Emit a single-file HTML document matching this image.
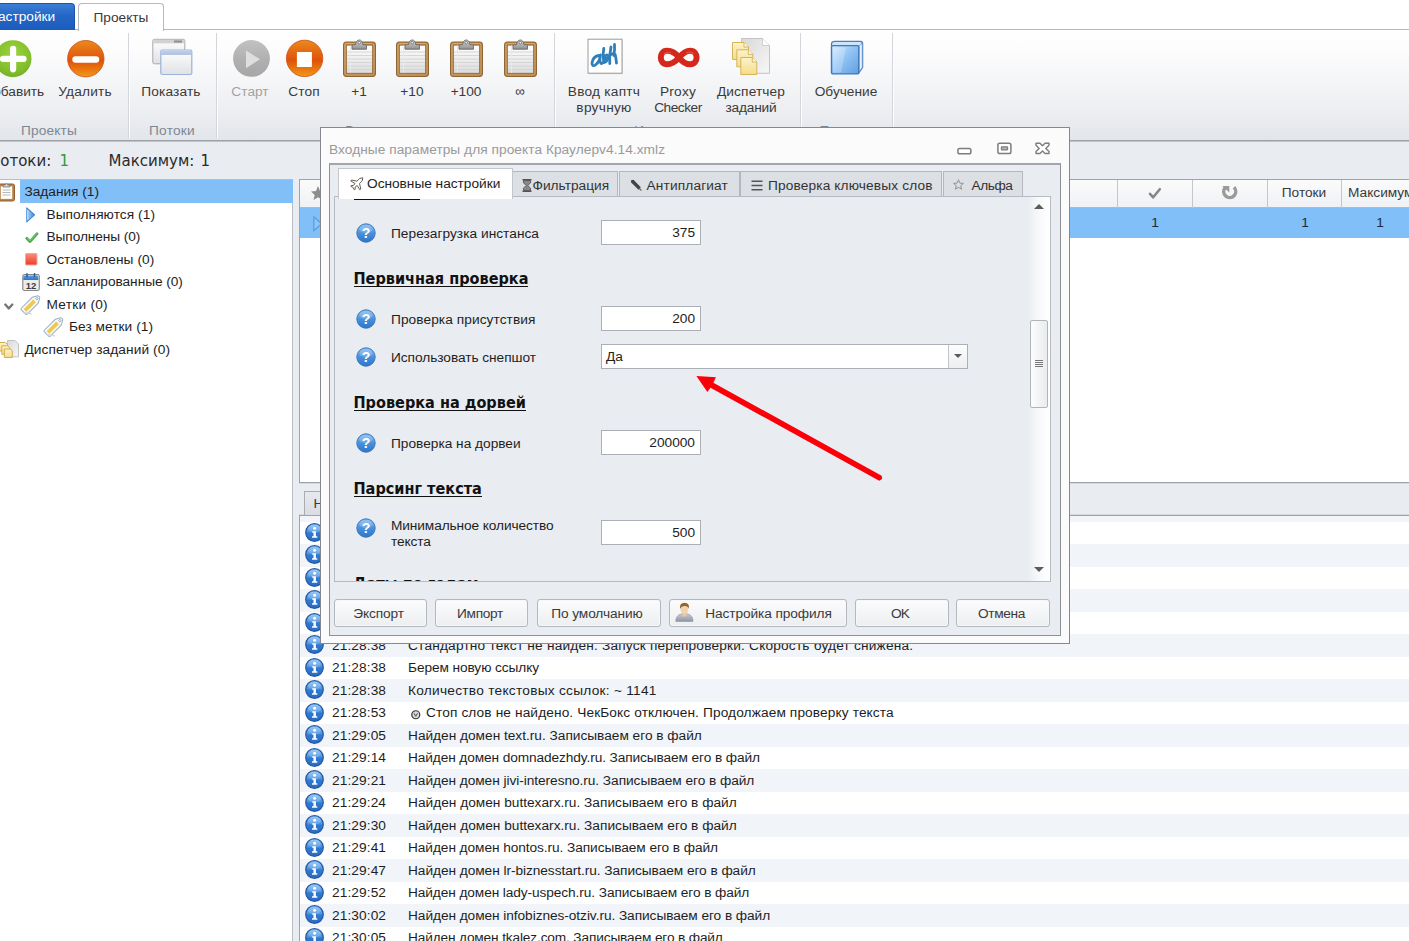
<!DOCTYPE html>
<html lang="ru"><head><meta charset="utf-8"><title>ZennoPoster</title>
<style>
*{box-sizing:border-box;margin:0;padding:0}
html,body{width:1409px;height:941px;overflow:hidden;background:#e9ecf1}
body{position:relative;font-family:"Liberation Sans",sans-serif;font-size:13.7px;color:#222;line-height:16px}
.abs{position:absolute}
.t{position:absolute;white-space:nowrap}
.c{position:absolute;white-space:nowrap;transform:translateX(-50%);text-align:center}
svg{position:absolute;overflow:visible}
/* top */
#tabstrip{left:0;top:0;width:1409px;height:30px;background:#fff}
#tab1{left:-6px;top:3px;width:81px;height:27px;border-radius:4px 4px 0 0;background:linear-gradient(#3b7fd6 0,#2466c6 45%,#1b5bbb 100%);border:1px solid #1d55ab;border-bottom:none}
#tab1 span{left:3px;top:5px;color:#fff}
#tab2{left:78px;top:3px;width:86px;height:28px;border-radius:4px 4px 0 0;background:#fff;border:1px solid #b5b8bd;border-bottom:none;z-index:3}
#ribbon{left:0;top:29px;width:1409px;height:112px;background:linear-gradient(#ffffff 0,#fcfcfd 20%,#f3f4f6 52%,#eaecf0 80%,#e2e5e9 100%);border-top:1px solid #b5b8bd;border-bottom:1px solid #9fa3a9;box-shadow:0 1px 0 #bfc2c7}
.sep{position:absolute;top:33px;width:2px;height:105px;background:linear-gradient(90deg,#d3d6db 0,#d3d6db 50%,#fdfdfe 50%,#fdfdfe 100%)}
.rl{color:#3a3a3a}
.dis{color:#a3a3a3}
.cap{color:#7d8793}

.st{font-family:"DejaVu Sans","Liberation Sans",sans-serif;font-size:15px;line-height:20px;color:#2b2b2b}
#tree{left:-1px;top:179px;width:294px;height:770px;background:#fff;border:1px solid #b9bcc2}
#treesel{left:20px;top:179.5px;width:273px;height:23px;background:#80bff7}
.tr{color:#1e1e1e}
#grid{left:299px;top:179px;width:1120px;height:304px;background:#fff;border:1px solid #9fa3a9;box-shadow:0 1px 0 #d5d8dc}
#ghead{left:300px;top:180px;width:1110px;height:28px;background:linear-gradient(#fbfbfc,#eff1f4);border-bottom:1px solid #b4b8be}
.gsep{position:absolute;top:180px;width:1px;height:27.5px;background:#c3c6cb}
#grow{left:300px;top:208px;width:1110px;height:29.5px;background:#80bff7}
#loghead{left:298px;top:484px;width:1120px;height:32px;background:#e9ecf1}
#log{left:299px;top:515px;width:1120px;height:430px;background:#fff;border:1px solid #9fa3a9;box-shadow:0 -1px 0 #d5d8dc;overflow:hidden}
.stripe{position:absolute;left:0;width:1120px;height:22.5px;background:#f1f4f9}
.lg{color:#1e1e1e}

#dlg{left:320px;top:127px;width:750px;height:517px;background:#fbfbfc;border:1px solid #85898f;z-index:10}
#dw{left:0;top:-1px;width:748px;height:516px}
#dlg .ttl{left:8px;top:15px;color:#9a9a9a}
#inner{left:8px;top:36px;width:732px;height:473px;background:#e9ecf1;border:1px solid #8e9298;border-top:2px solid #a2a6ac}
.tab{position:absolute;top:44px;height:27px;background:#dcdfe4;border:1px solid #b4b8be;border-bottom:none;color:#333;white-space:nowrap}
.tab span{position:absolute;top:6px;white-space:nowrap}
#tabA{left:17px;top:41px;width:175px;height:31px;background:#fff;border:1px solid #c3c6cb;border-bottom:none;z-index:2}
#page{left:13px;top:69px;width:717px;height:386px;background:#e9ecf0;border:1px solid #b7bbc1;overflow:hidden}
#page .h{position:absolute;left:18.5px;font-weight:bold;font-size:16.1px;color:#111;white-space:nowrap;border-bottom:1.5px solid #111;line-height:15px;padding-bottom:0px;font-family:"DejaVu Sans Condensed","Liberation Sans",sans-serif}
#page .lb{position:absolute;left:56px;color:#1e1e1e;white-space:nowrap}
#page .in{position:absolute;left:266px;width:100px;height:25px;background:#fff;border:1px solid #abafb6;text-align:right;padding:4px 5px 0 0;color:#1e1e1e}
#page .q{position:absolute;left:22px;width:20px;height:20px}
#sb{left:692.5px;top:0;width:22px;height:384px;background:linear-gradient(90deg,#e9ecf0,#f6f7f9 40%,#ffffff)}
#thumb{left:2px;top:123px;width:18.5px;height:88px;border:1px solid #b0b4ba;border-radius:2px;background:linear-gradient(90deg,#fdfdfd,#e9ebee)}
.btn{position:absolute;top:472px;height:28px;border:1px solid #b4b8be;border-radius:3px;background:linear-gradient(#fcfcfd,#eceef1);color:#3a3a3a;text-align:center;padding:6px 3px 0 0;white-space:nowrap;box-shadow:0 0 0 1px #f6f7f9 inset}
</style></head><body>
<div id="tabstrip" class="abs"></div>
<div id="ribbon" class="abs"></div>
<div id="tab1" class="abs"><span class="t">астройки</span></div>
<div id="tab2" class="abs"><span class="c" style="left:42px;top:6px;color:#3a3a3a">Проекты</span></div>
<div class="sep" style="left:128px"></div>
<div class="sep" style="left:216px"></div>
<div class="sep" style="left:554px"></div>
<div class="sep" style="left:800px"></div>
<div class="sep" style="left:892px"></div>
<span id="rl1" class="c rl" style="left:14px;top:84px">Добавить</span>
<span id="rl2" class="c rl" style="left:85px;top:84px;letter-spacing:0.162px">Удалить</span>
<span id="rl3" class="c rl" style="left:171px;top:84px;letter-spacing:0.139px">Показать</span>
<span id="rl4" class="c dis" style="left:250px;top:84px;letter-spacing:0.019px">Старт</span>
<span id="rl5" class="c rl" style="left:304px;top:84px;letter-spacing:0.067px">Стоп</span>
<span id="rl6" class="c rl" style="left:359px;top:84px;letter-spacing:0.045px">+1</span>
<span id="rl7" class="c rl" style="left:412px;top:84px;letter-spacing:0.027px">+10</span>
<span id="rl8" class="c rl" style="left:466px;top:84px;letter-spacing:-0.036px">+100</span>
<span id="rl9" class="c rl" style="left:520px;top:84px">∞</span>
<span id="rl10" class="c rl" style="left:604px;top:84px;letter-spacing:0.234px">Ввод каптч</span>
<span id="rl11" class="c rl" style="left:604px;top:100px;letter-spacing:0.275px">вручную</span>
<span id="rl12" class="c rl" style="left:678px;top:84px;letter-spacing:0.240px">Proxy</span>
<span id="rl13" class="c rl" style="left:678px;top:100px;letter-spacing:-0.467px">Checker</span>
<span id="rl14" class="c rl" style="left:751px;top:84px;letter-spacing:0.126px">Диспетчер</span>
<span id="rl15" class="c rl" style="left:751px;top:100px;letter-spacing:-0.178px">заданий</span>
<span id="rl16" class="c rl" style="left:846px;top:84px;letter-spacing:0.001px">Обучение</span>
<span id="rl17" class="c cap" style="left:49px;top:123px;letter-spacing:0.152px">Проекты</span>
<span id="rl18" class="c cap" style="left:172px;top:123px;letter-spacing:0.247px">Потоки</span>
<span id="rl19" class="c cap" style="left:385px;top:123px">Выполнение</span>
<span id="rl20" class="c cap" style="left:677px;top:123px">Инструменты</span>
<span id="rl21" class="c cap" style="left:846px;top:123px">Помощь</span>
<svg width="0" height="0" style="left:0;top:0"><defs>
<radialGradient id="gGreen" cx="50%" cy="35%" r="70%"><stop offset="0" stop-color="#9ad33f"/><stop offset=".6" stop-color="#86c22e"/><stop offset="1" stop-color="#73ae22"/></radialGradient>
<linearGradient id="gOr" x1="0" y1="0" x2="0" y2="1"><stop offset="0" stop-color="#ec8a1c"/><stop offset=".25" stop-color="#e57014"/><stop offset=".55" stop-color="#de520b"/><stop offset=".8" stop-color="#e9780f"/><stop offset="1" stop-color="#f2981d"/></linearGradient>
<linearGradient id="gGray" x1="0" y1="0" x2="0" y2="1"><stop offset="0" stop-color="#c2c2c2"/><stop offset=".5" stop-color="#b1b1b1"/><stop offset="1" stop-color="#a6a6a6"/></linearGradient>
<linearGradient id="gBoard" x1="0" y1="0" x2="1" y2="1"><stop offset="0" stop-color="#bb8a4e"/><stop offset="1" stop-color="#a3733a"/></linearGradient>
<linearGradient id="gPaper" x1="0" y1="0" x2="0" y2="1"><stop offset="0" stop-color="#ffffff"/><stop offset="1" stop-color="#dcdcdc"/></linearGradient>
<linearGradient id="gClip" x1="0" y1="0" x2="0" y2="1"><stop offset="0" stop-color="#d8d8d8"/><stop offset="1" stop-color="#8f8f8f"/></linearGradient>
<linearGradient id="gWin" x1="0" y1="0" x2="0" y2="1"><stop offset="0" stop-color="#ffffff"/><stop offset="1" stop-color="#dfe1e5"/></linearGradient>
<linearGradient id="gBook" x1="0" y1="0" x2="1" y2="1"><stop offset="0" stop-color="#d4e9ff"/><stop offset=".45" stop-color="#93c4f5"/><stop offset="1" stop-color="#5f9fe0"/></linearGradient>
<linearGradient id="gInfo" x1="0" y1="0" x2="0" y2="1"><stop offset="0" stop-color="#86c3f5"/><stop offset=".45" stop-color="#4a92e0"/><stop offset=".55" stop-color="#2f78d0"/><stop offset="1" stop-color="#2a6cc6"/></linearGradient>
<linearGradient id="gQ" x1="0" y1="0" x2="0" y2="1"><stop offset="0" stop-color="#7db9f0"/><stop offset=".5" stop-color="#4a90dc"/><stop offset="1" stop-color="#2f74c8"/></linearGradient>
<linearGradient id="gYel" x1="0" y1="0" x2="0" y2="1"><stop offset="0" stop-color="#fdf3c8"/><stop offset="1" stop-color="#f3dc8c"/></linearGradient>
<linearGradient id="gPg" x1="0" y1="0" x2="1" y2="1"><stop offset="0" stop-color="#d9d9d9"/><stop offset="1" stop-color="#f7f7f7"/></linearGradient>
<linearGradient id="gRed" x1="0" y1="0" x2="0" y2="1"><stop offset="0" stop-color="#fb8d7c"/><stop offset="1" stop-color="#ee3a2a"/></linearGradient>
<linearGradient id="gCal" x1="0" y1="0" x2="0" y2="1"><stop offset="0" stop-color="#5aa2e3"/><stop offset="1" stop-color="#2f74c0"/></linearGradient>
<linearGradient id="gPlay" x1="0" y1="0" x2="1" y2="0"><stop offset="0" stop-color="#a9d4f7"/><stop offset="1" stop-color="#3f88d6"/></linearGradient>
<linearGradient id="gBody" x1="0" y1="0" x2="0" y2="1"><stop offset="0" stop-color="#c9ccd4"/><stop offset="1" stop-color="#8f95a3"/></linearGradient>
<g id="clipb"><rect x=".5" y="3" width="32" height="34.500" rx="2.400" fill="url(#gBoard)" stroke="#8f6633" stroke-width="1"/><rect x="2" y="4.500" width="29" height="31.500" rx="1.600" fill="none" stroke="#d3aa73" stroke-width="1"/><rect x="3.600" y="6.200" width="25.800" height="28" fill="url(#gPaper)" stroke="#936a38" stroke-width=".7"/><g stroke="#cfcfcf" stroke-width=".8"><path d="M4 13h25M4 16.500h25M4 20h25M4 23.500h25M4 27h25M4 30.500h25"/></g><path d="M7.500 6.600v27" stroke="#e9e9e9" stroke-width="1"/><path d="M9 10.200 v-3.200 q0-1.300 1.300-1.300 h2.300 q.6-4.700 3.650-4.700 t3.650 4.700 h2.300 q1.300 0 1.300 1.300 V10.200 Z" fill="url(#gClip)" stroke="#6a6a6a" stroke-width=".9"/><circle cx="16.250" cy="3.700" r="1.300" fill="#f2f2f2" stroke="#6a6a6a" stroke-width=".8"/></g>
<g id="info"><circle cx="9.500" cy="9.500" r="8.800" fill="url(#gInfo)" stroke="#2458a4" stroke-width="1.200"/><ellipse cx="9.500" cy="5.500" rx="6.500" ry="3.800" fill="#ffffff" opacity=".18"/><circle cx="9.600" cy="5.200" r="1.500" fill="#fff"/><path d="M7.300 8.200h3.600v5h1.400v1.600H7v-1.600h1.500V9.800H7.300Z" fill="#fff"/></g>
<g id="tag"><g transform="translate(10 10.5) rotate(-45)"><path d="M-9.500 -4.200 H6 L11 -1.500 Q12 0 11 1.500 L6 4.200 H-9.500 Q-10.600 4.200 -10.600 3 V-3 Q-10.600 -4.200 -9.500 -4.200 Z" fill="#f6f8fa" stroke="#9db0c4" stroke-width="1"/><rect x="-8.500" y="-1.900" width="13.500" height="3.800" fill="#efc94a"/><circle cx="8.300" cy="0" r="1.100" fill="#fff" stroke="#8ea2b8" stroke-width=".8"/></g><path d="M3.500 18.800 L10 19.800" stroke="#d3d6da" stroke-width="1.600" stroke-linecap="round"/></g>
<g id="play"><path d="M.8 .8 L8.600 7.800 L.8 14.800 Z" fill="url(#gPlay)" stroke="#3f86d3" stroke-width="1.100" stroke-linejoin="round"/><path d="M1.700 2.800 V12.800" stroke="#c4e2fa" stroke-width="1"/></g>
</defs></svg>
<svg style="left:-6px;top:40px" width="38" height="38"><circle cx="19" cy="18.700" r="18.500" fill="url(#gGreen)"/><path d="M9 18.900h20.500M19.100 8.800v20.500" stroke="#fff" stroke-width="6.200" stroke-linecap="round"/></svg>
<svg style="left:67px;top:40px" width="38" height="38"><circle cx="18.800" cy="18.700" r="18.200" fill="url(#gOr)" stroke="#d04d10" stroke-width=".8"/><path d="M8.500 19.500h20.500" stroke="#fff" stroke-width="6.400" stroke-linecap="round"/></svg>
<svg style="left:152px;top:38px" width="41" height="38"><rect x=".8" y="1.300" width="32" height="24.500" rx="1.500" fill="url(#gWin)" stroke="#a9a9a9" stroke-width="1"/><rect x="1.300" y="1.800" width="31" height="3.600" fill="#d2d2d2"/><rect x="22" y="2.500" width="8" height="2" fill="#8f8f8f"/><rect x="8.800" y="12" width="31" height="24.500" rx="1.500" fill="url(#gWin)" stroke="#9db2d8" stroke-width="1.200"/><rect x="9.400" y="12.600" width="29.800" height="3.400" fill="#b9cbea"/><path d="M9.400 16.300h29.800" stroke="#8ea6d2" stroke-width=".8"/></svg>
<svg style="left:233px;top:40px" width="38" height="38"><circle cx="18.500" cy="18.400" r="18.400" fill="url(#gGray)"/><path d="M13 10.500 L27 19.300 L13 28.200 Z" fill="#dedede"/></svg>
<svg style="left:286px;top:40px" width="38" height="38"><circle cx="18.600" cy="18.400" r="18.200" fill="url(#gOr)" stroke="#d04d10" stroke-width=".8"/><rect x="10.900" y="12" width="15" height="15" fill="#fff"/></svg>
<svg style="left:342.5px;top:38.700px" width="33" height="38"><use href="#clipb"/></svg>
<svg style="left:396.2px;top:38.700px" width="33" height="38"><use href="#clipb"/></svg>
<svg style="left:449.9px;top:38.700px" width="33" height="38"><use href="#clipb"/></svg>
<svg style="left:503.6px;top:38.700px" width="33" height="38"><use href="#clipb"/></svg>
<svg style="left:587px;top:38px" width="37" height="38"><rect x="1.800" y="2.200" width="34" height="34" fill="#bdbdbd" opacity=".55"/><rect x="1" y="1.200" width="34" height="34" fill="#fff" stroke="#9c9c9c" stroke-width="1"/><g fill="none" stroke="#2f80ba" stroke-width="2.800" stroke-linecap="round" stroke-linejoin="round"><path d="M11.500 17.500 q-5.500 1 -6.500 7.500 q0 3.500 3.200 2.200 q4.500-3 5.300-10.200 q-1.500 7 .8 8.500 q2.500 0 4.500-6"/><path d="M16.800 10.500 q-1.500 9 .5 14 q3.500-1 4.200-6.500 q-2-2.500-4 1"/><path d="M24 9 q-2 9-1.200 16.500 M23 17.500 q3.200-3.500 5.200-1 q.8 3.500 1.300 8.500"/><path d="M27.500 6.500 q.5 6 -.8 11"/></g></svg>
<svg style="left:658px;top:48px" width="42" height="20"><path d="M21 9.600 C16.500 3.300 12.500 2.800 9 2.800 C4.500 2.800 2.800 6.300 2.800 9.600 C2.800 13.200 5 16.300 9 16.300 C13 16.300 16.800 14.500 21 9.600 C25 4.800 28.500 2.800 32.200 2.800 C36.500 2.800 38.600 6.200 38.600 9.600 C38.600 13.200 36.300 16.300 32.200 16.300 C28.500 16.300 25.300 15.200 21 9.600 Z" fill="none" stroke="#d5281c" stroke-width="6" stroke-linejoin="round"/><path d="M6 6 Q9 3.300 13 4.800 M28 5 Q33 3 36 6.200" fill="none" stroke="#ee5a45" stroke-width="1.200" opacity=".8"/></svg>
<svg style="left:731px;top:37px" width="40" height="39"><path d="M10.500 1.500h21l7 7v27.800h-28Z" fill="url(#gPg)" stroke="#c4c4c4" stroke-width="1"/><path d="M31.500 1.500v7h7" fill="#fff" stroke="#c4c4c4" stroke-width=".8"/><g stroke="#d7b45a" stroke-width="1" fill="url(#gYel)"><path d="M1.500 5.500h11.500l4.500 4.500v12.500h-16Z"/><path d="M13 5.500v4.500h4.500" fill="#fffbe8"/><path d="M5.800 12.800h11.500l4.500 4.500v12.500h-16Z"/><path d="M17.300 12.800v4.500h4.500" fill="#fffbe8"/><path d="M9.800 20.500h11.500l4.500 4.500v12.500h-16Z"/><path d="M21.300 20.500v4.500h4.500" fill="#fffbe8"/></g></svg>
<svg style="left:830px;top:40px" width="35" height="36"><path d="M1.500 4 Q1.500 1.300 5 1.300 H30.500 Q32.600 1.300 32.600 3.500 V27.500 L28.800 33 V6.500 H1.500 Z" fill="#cfe3fa" stroke="#4a7fc0" stroke-width="1.300" stroke-linejoin="round"/><path d="M28.800 6.300 L32.300 3 V27.300 L28.800 32.500 Z" fill="#e9f2fc" stroke="#5d8fca" stroke-width=".8"/><rect x="1.500" y="5.600" width="27.300" height="28.300" rx="1.500" fill="url(#gBook)" stroke="#3f78ba" stroke-width="1.400"/><path d="M3 7.500 h13 l-5 25 h-8 Z" fill="#fff" opacity=".22"/></svg>
<span class="t st" style="left:-11px;top:151px">Потоки:</span><span class="t st" style="left:59.5px;top:151px;color:#2e9a3e">1</span>
<span class="t st" style="left:108.5px;top:151px">Максимум:</span><span class="t st" style="left:200.5px;top:151px">1</span>
<div id="tree" class="abs"></div><div id="treesel" class="abs"></div>
<span id="tr0" class="t tr" style="left:24.5px;top:184.0px;letter-spacing:-0.013px">Задания (1)</span>
<span id="tr1" class="t tr" style="left:46.5px;top:206.5px;letter-spacing:0.066px">Выполняются (1)</span>
<span id="tr2" class="t tr" style="left:46.5px;top:229.0px;letter-spacing:-0.075px">Выполнены (0)</span>
<span id="tr3" class="t tr" style="left:46.5px;top:251.5px;letter-spacing:0.062px">Остановлены (0)</span>
<span id="tr4" class="t tr" style="left:46.5px;top:274.0px;letter-spacing:-0.040px">Запланированные (0)</span>
<span id="tr5" class="t tr" style="left:46.5px;top:296.5px;letter-spacing:0.249px">Метки (0)</span>
<span id="tr6" class="t tr" style="left:69px;top:319.0px;letter-spacing:0.048px">Без метки (1)</span>
<span id="tr7" class="t tr" style="left:24.5px;top:341.5px;letter-spacing:0.094px">Диспетчер заданий (0)</span>
<svg style="left:-2px;top:182px" width="18" height="20"><rect x=".5" y="2" width="16" height="17" rx="1.800" fill="#b9844a" stroke="#8c5f2c" stroke-width="1"/><rect x="2.800" y="4.300" width="11.400" height="12.600" fill="#fff"/><path d="M4.500 8h8M4.500 10.500h8M4.500 13h8" stroke="#b9b9b9" stroke-width="1"/><path d="M5 5 V3 h2 q1.500-3 3 0 h2 v2 Z" fill="#cfcfcf" stroke="#777" stroke-width=".8"/></svg>
<svg style="left:26px;top:206.500px" width="10" height="16"><use href="#play"/></svg>
<svg style="left:24.500px;top:231.500px" width="15" height="12"><path d="M1.800 6.300 L5 9.600 L12 1.800" fill="none" stroke="#4aa84e" stroke-width="2.800" stroke-linecap="round" stroke-linejoin="round"/><path d="M2.200 6 L5 8.800 L11.600 1.800" fill="none" stroke="#84d084" stroke-width=".9" stroke-linecap="round"/></svg>
<svg style="left:25px;top:253px" width="13" height="13"><rect x=".5" y=".5" width="11.500" height="11.500" rx="1" fill="url(#gRed)" stroke="#f6a79b" stroke-width="1"/></svg>
<svg style="left:22px;top:273px" width="18" height="18"><rect x=".8" y="1.500" width="16.500" height="16" rx="1.800" fill="#ececec" stroke="#858585" stroke-width="1.100"/><path d="M1.300 3.800 q0-1.300 1.300-1.300 h12.400 q1.300 0 1.300 1.300 V7 H1.300 Z" fill="url(#gCal)"/><path d="M5 .8v3M12.500 .8v3" stroke="#2a5f9e" stroke-width="1.600" stroke-linecap="round"/><text x="9" y="15.600" font-family="Liberation Sans, sans-serif" font-size="9.500" font-weight="bold" fill="#3c3c3c" text-anchor="middle">12</text></svg>
<svg style="left:21px;top:293.500px" width="20" height="21"><use href="#tag"/></svg>
<svg style="left:44px;top:315.500px" width="20" height="21"><use href="#tag"/></svg>
<svg style="left:3.700px;top:302.500px" width="10" height="8"><path d="M1.300 1.500 L4.800 5.500 L8.300 1.500" fill="none" stroke="#747474" stroke-width="2.300" stroke-linecap="round" stroke-linejoin="round"/></svg>
<svg style="left:-1px;top:339px" width="21" height="19"><path d="M8.500 1.500h7.500l3.500 3.500v12.800h-11Z" fill="url(#gPg)" stroke="#c2c2c2" stroke-width="1"/><g stroke="#d2ad52" stroke-width="1" fill="url(#gYel)"><path d="M.5 3.500h6l2 2v6.500h-8Z"/><path d="M2.800 6.800h6l2 2v6.500h-8Z"/><path d="M5.300 10h6l2 2v6.500h-8Z"/></g></svg>
<div id="grid" class="abs"></div><div id="ghead" class="abs"></div><div id="grow" class="abs"></div>
<div class="gsep" style="left:1117px"></div>
<div class="gsep" style="left:1192px"></div>
<div class="gsep" style="left:1267px"></div>
<div class="gsep" style="left:1341px"></div>
<span class="c rl" style="left:1304px;top:185px">Потоки</span><span class="t rl" style="left:1348px;top:185px">Максимум</span>
<span class="c" style="left:1155px;top:215px;color:#1e2a3a">1</span>
<span class="c" style="left:1305px;top:215px;color:#1e2a3a">1</span>
<span class="c" style="left:1380px;top:215px;color:#1e2a3a">1</span>
<svg style="left:1148px;top:187px" width="14" height="13"><path d="M2 6.800 L5.200 10.300 L11.800 2.200" fill="none" stroke="#868686" stroke-width="2.600" stroke-linecap="round" stroke-linejoin="round"/></svg>
<svg style="left:1221px;top:184px" width="18" height="17"><path d="M4.200 3.600 A6 6 0 1 0 13 3.300" fill="none" stroke="#9a9a9a" stroke-width="3.500"/><path d="M1.300 2 H8.300 V8.600 Z" fill="#9a9a9a"/></svg>
<svg style="left:310px;top:185px" width="16" height="16"><path d="M8 1 L10 6 L15 6.500 L11.300 10 L12.500 15 L8 12.300 L3.500 15 L4.700 10 L1 6.500 L6 6 Z" fill="#8c8c8c"/></svg>
<svg style="left:312.500px;top:215.500px" width="10" height="16"><path d="M.8 .8 L8.600 7.800 L.8 14.800 Z" fill="#8ec6f8" stroke="#5a9fe2" stroke-width="1.300" stroke-linejoin="round"/></svg>
<div id="loghead" class="abs"></div>
<div id="log" class="abs">
<div class="stripe" style="top:-17.0px"></div><div class="stripe" style="top:28.0px"></div><div class="stripe" style="top:73.0px"></div><div class="stripe" style="top:118.0px"></div><div class="stripe" style="top:163.0px"></div><div class="stripe" style="top:208.0px"></div><div class="stripe" style="top:253.0px"></div><div class="stripe" style="top:298.0px"></div><div class="stripe" style="top:343.0px"></div><div class="stripe" style="top:388.0px"></div><div class="stripe" style="top:433.0px"></div>
</div>
<span class="t lg" style="left:332px;top:637.7px;letter-spacing:.1px">21:28:38</span><span id="lg0" class="t lg" style="left:408px;top:637.7px;letter-spacing:0.190px">Стандартно текст не найден. Запуск перепроверки. Скорость будет снижена.</span>
<span class="t lg" style="left:332px;top:660.2px;letter-spacing:.1px">21:28:38</span><span id="lg1" class="t lg" style="left:408px;top:660.2px;letter-spacing:-0.089px">Берем новую ссылку</span>
<span class="t lg" style="left:332px;top:682.7px;letter-spacing:.1px">21:28:38</span><span id="lg2" class="t lg" style="left:408px;top:682.7px;letter-spacing:0.260px">Количество текстовых ссылок: ~ 1141</span>
<span class="t lg" style="left:332px;top:705.2px;letter-spacing:.1px">21:28:53</span><span id="lg3" class="t lg" style="left:408px;top:705.2px;letter-spacing:0.115px"><svg style="position:relative;display:inline-block;vertical-align:-2px;margin:0 5.500px 0 3px" width="9.500" height="9.500" viewBox="0 0 9.500 9.500"><circle cx="4.750" cy="4.750" r="4" fill="#d9d9d9" stroke="#3a3a3a" stroke-width="1.200"/><path d="M3 3.300 L4.750 6.300 L6.500 3.300" fill="none" stroke="#4a4a4a" stroke-width="1"/></svg>Стоп слов не найдено. ЧекБокс отключен. Продолжаем проверку текста</span>
<span class="t lg" style="left:332px;top:727.7px;letter-spacing:.1px">21:29:05</span><span id="lg4" class="t lg" style="left:408px;top:727.7px;letter-spacing:-0.009px">Найден домен text.ru. Записываем его в файл</span>
<span class="t lg" style="left:332px;top:750.2px;letter-spacing:.1px">21:29:14</span><span id="lg5" class="t lg" style="left:408px;top:750.2px;letter-spacing:-0.105px">Найден домен domnadezhdy.ru. Записываем его в файл</span>
<span class="t lg" style="left:332px;top:772.7px;letter-spacing:.1px">21:29:21</span><span id="lg6" class="t lg" style="left:408px;top:772.7px;letter-spacing:-0.051px">Найден домен jivi-interesno.ru. Записываем его в файл</span>
<span class="t lg" style="left:332px;top:795.2px;letter-spacing:.1px">21:29:24</span><span id="lg7" class="t lg" style="left:408px;top:795.2px;letter-spacing:0.005px">Найден домен buttexarx.ru. Записываем его в файл</span>
<span class="t lg" style="left:332px;top:817.7px;letter-spacing:.1px">21:29:30</span><span id="lg8" class="t lg" style="left:408px;top:817.7px;letter-spacing:0.005px">Найден домен buttexarx.ru. Записываем его в файл</span>
<span class="t lg" style="left:332px;top:840.2px;letter-spacing:.1px">21:29:41</span><span id="lg9" class="t lg" style="left:408px;top:840.2px;letter-spacing:-0.072px">Найден домен hontos.ru. Записываем его в файл</span>
<span class="t lg" style="left:332px;top:862.7px;letter-spacing:.1px">21:29:47</span><span id="lg10" class="t lg" style="left:408px;top:862.7px;letter-spacing:-0.053px">Найден домен lr-biznesstart.ru. Записываем его в файл</span>
<span class="t lg" style="left:332px;top:885.2px;letter-spacing:.1px">21:29:52</span><span id="lg11" class="t lg" style="left:408px;top:885.2px;letter-spacing:-0.095px">Найден домен lady-uspech.ru. Записываем его в файл</span>
<span class="t lg" style="left:332px;top:907.7px;letter-spacing:.1px">21:30:02</span><span id="lg12" class="t lg" style="left:408px;top:907.7px;letter-spacing:-0.061px">Найден домен infobiznes-otziv.ru. Записываем его в файл</span>
<span class="t lg" style="left:332px;top:930.2px;letter-spacing:.1px">21:30:05</span><span id="lg13" class="t lg" style="left:408px;top:930.2px;letter-spacing:-0.150px">Найден домен tkalez.com. Записываем его в файл</span>
<svg style="left:304.800px;top:522.5px" width="19" height="19"><use href="#info"/></svg><svg style="left:304.800px;top:545.0px" width="19" height="19"><use href="#info"/></svg><svg style="left:304.800px;top:567.5px" width="19" height="19"><use href="#info"/></svg><svg style="left:304.800px;top:590.0px" width="19" height="19"><use href="#info"/></svg><svg style="left:304.800px;top:612.5px" width="19" height="19"><use href="#info"/></svg><svg style="left:304.800px;top:635.0px" width="19" height="19"><use href="#info"/></svg><svg style="left:304.800px;top:657.5px" width="19" height="19"><use href="#info"/></svg><svg style="left:304.800px;top:680.0px" width="19" height="19"><use href="#info"/></svg><svg style="left:304.800px;top:702.5px" width="19" height="19"><use href="#info"/></svg><svg style="left:304.800px;top:725.0px" width="19" height="19"><use href="#info"/></svg><svg style="left:304.800px;top:747.5px" width="19" height="19"><use href="#info"/></svg><svg style="left:304.800px;top:770.0px" width="19" height="19"><use href="#info"/></svg><svg style="left:304.800px;top:792.5px" width="19" height="19"><use href="#info"/></svg><svg style="left:304.800px;top:815.0px" width="19" height="19"><use href="#info"/></svg><svg style="left:304.800px;top:837.5px" width="19" height="19"><use href="#info"/></svg><svg style="left:304.800px;top:860.0px" width="19" height="19"><use href="#info"/></svg><svg style="left:304.800px;top:882.5px" width="19" height="19"><use href="#info"/></svg><svg style="left:304.800px;top:905.0px" width="19" height="19"><use href="#info"/></svg><svg style="left:304.800px;top:927.5px" width="19" height="19"><use href="#info"/></svg>
<div class="abs" style="left:304px;top:491px;width:120px;height:24px;background:linear-gradient(#e7e9ed,#d9dce1);border:1px solid #a9adb3;border-bottom:none"><span class="t rl" style="left:8.5px;top:4px">Настройки</span></div>
<div id="dlg" class="abs"><div id="dw" class="abs">
<span id="ttl" class="t ttl" style="letter-spacing:0.056px">Входные параметры для проекта Краулерv4.14.xmlz</span>
<div id="inner" class="abs"></div>
<div id="tabA" class="abs"><span id="tb0" class="t" style="left:28px;top:7px;color:#222;letter-spacing:-0.014px">Основные настройки</span></div>
<div class="tab" style="left:191px;width:106px"><span id="tb1" style="left:19.5px;letter-spacing:0.010px">Фильтрация</span></div>
<div class="tab" style="left:297.5px;width:121px"><span id="tb2" style="left:27px;letter-spacing:0.151px">Антиплагиат</span></div>
<div class="tab" style="left:419px;width:202px"><span id="tb3" style="left:27px;letter-spacing:0.137px">Проверка ключевых слов</span></div>
<div class="tab" style="left:621.5px;width:80px"><span id="tb4" style="left:28px;letter-spacing:-0.445px">Альфа</span></div>
<div id="page" class="abs">
<div class="abs" style="left:19px;top:1.5px;width:66px;height:1.5px;background:#111"></div>
<svg style="left:21px;top:25.5px" width="20" height="20"><circle cx="10" cy="10" r="9.2" fill="url(#gQ)" stroke="#3a78c2" stroke-width="1"/><ellipse cx="10" cy="6" rx="6.800" ry="4" fill="#fff" opacity=".2"/><text x="10" y="15" font-family="Liberation Sans, sans-serif" font-size="14" font-weight="bold" fill="#fff" text-anchor="middle">?</text></svg><span id="lb1" class="lb" style="top:28.5px;letter-spacing:0.032px">Перезагрузка инстанса</span><div class="in" style="top:22.5px">375</div>
<span class="h" style="top:73.5px">Первичная проверка</span>
<svg style="left:21px;top:111.5px" width="20" height="20"><circle cx="10" cy="10" r="9.2" fill="url(#gQ)" stroke="#3a78c2" stroke-width="1"/><ellipse cx="10" cy="6" rx="6.800" ry="4" fill="#fff" opacity=".2"/><text x="10" y="15" font-family="Liberation Sans, sans-serif" font-size="14" font-weight="bold" fill="#fff" text-anchor="middle">?</text></svg><span id="lb2" class="lb" style="top:114.5px;letter-spacing:0.073px">Проверка присутствия</span><div class="in" style="top:108.5px">200</div>
<svg style="left:21px;top:149.5px" width="20" height="20"><circle cx="10" cy="10" r="9.2" fill="url(#gQ)" stroke="#3a78c2" stroke-width="1"/><ellipse cx="10" cy="6" rx="6.800" ry="4" fill="#fff" opacity=".2"/><text x="10" y="15" font-family="Liberation Sans, sans-serif" font-size="14" font-weight="bold" fill="#fff" text-anchor="middle">?</text></svg><span id="lb3" class="lb" style="top:152.5px;letter-spacing:-0.045px">Использовать снепшот</span><div class="in" style="top:146.5px;width:367px;text-align:left;padding-left:4px">Да</div><div class="abs" style="left:613px;top:147.5px;width:19px;height:23px;border-left:1px solid #c3c6cb;background:linear-gradient(#fdfdfd,#eceef1)"><div class="abs" style="left:5px;top:9.5px;border:4px solid transparent;border-top:4.5px solid #5a5a5a;border-bottom:none"></div></div>
<span class="h" style="top:197.5px">Проверка на дорвей</span>
<svg style="left:21px;top:235.5px" width="20" height="20"><circle cx="10" cy="10" r="9.2" fill="url(#gQ)" stroke="#3a78c2" stroke-width="1"/><ellipse cx="10" cy="6" rx="6.800" ry="4" fill="#fff" opacity=".2"/><text x="10" y="15" font-family="Liberation Sans, sans-serif" font-size="14" font-weight="bold" fill="#fff" text-anchor="middle">?</text></svg><span id="lb4" class="lb" style="top:238.5px;letter-spacing:-0.004px">Проверка на дорвеи</span><div class="in" style="top:232.5px">200000</div>
<span class="h" style="top:283.5px">Парсинг текста</span>
<svg style="left:21px;top:321.0px" width="20" height="20"><circle cx="10" cy="10" r="9.2" fill="url(#gQ)" stroke="#3a78c2" stroke-width="1"/><ellipse cx="10" cy="6" rx="6.800" ry="4" fill="#fff" opacity=".2"/><text x="10" y="15" font-family="Liberation Sans, sans-serif" font-size="14" font-weight="bold" fill="#fff" text-anchor="middle">?</text></svg><span id="lb5" class="lb" style="top:320.7px;line-height:16.4px;letter-spacing:-0.102px">Минимальное количество<br>текста</span><div class="in" style="top:322.5px">500</div>
<span class="h" style="top:378.5px">Даты по годам</span>
<div id="sb" class="abs"><div id="thumb" class="abs"></div><div class="abs" style="left:6px;top:7px;border:5px solid transparent;border-bottom:5.5px solid #5c5c5c;border-top:none"></div><div class="abs" style="left:6px;top:369.5px;border:5px solid transparent;border-top:5.5px solid #5c5c5c;border-bottom:none"></div><div class="abs" style="left:7px;top:163px;width:8px;height:7px;background:repeating-linear-gradient(#777 0,#777 1px,transparent 1px,transparent 2px)"></div></div>
</div>
<svg style="left:29px;top:49.500px;z-index:3" width="14" height="14"><g fill="none" stroke="#6b5f55" stroke-width="1" stroke-linejoin="round"><path d="M12.800 .8 L9.500 1.500 L7 4.200 L1.500 3 L.8 4 L5 6.500 L3.500 8.500 L1.300 8.500 L.8 9.300 L3.200 10.500 L4.300 12.800 L5.200 12.300 L5.200 10 L7.200 8.500 L9.800 12.800 L10.800 12 L9.500 6.500 L12.200 4 Z"/></g></svg>
<svg style="left:201px;top:51.500px" width="10" height="13"><path d="M.5 .8h9M.5 12.200h9" stroke="#555" stroke-width="1.600"/><path d="M1.500 1.500h7v2.300L5.800 6.500 L8.500 9.200v2.300h-7V9.200L4.200 6.500 1.500 3.800Z" fill="#888" stroke="#555" stroke-width=".9"/></svg>
<svg style="left:308.500px;top:52px" width="12" height="12"><path d="M1 1.200 L3.500 .8 L10.800 8.300 L8.500 10.700 L1.200 3.500 Z" fill="#444"/><path d="M9.300 9.500 L11.500 11.500" stroke="#666" stroke-width="1.200"/></svg>
<svg style="left:429.500px;top:52.500px" width="12" height="11"><path d="M.5 1.300h11M.5 5.500h11M.5 9.700h11" stroke="#555" stroke-width="1.500"/></svg>
<svg style="left:632px;top:52px" width="11" height="11"><path d="M5.500 .8 L6.900 4.100 L10.400 4.400 L7.700 6.700 L8.600 10.200 L5.500 8.300 L2.400 10.200 L3.300 6.700 L.6 4.400 L4.100 4.100 Z" fill="none" stroke="#8a8a8a" stroke-width=".9" stroke-linejoin="round"/></svg>
<svg style="left:636px;top:16px" width="16" height="12"><rect x=".9" y="5.600" width="13" height="5.200" rx="1.800" fill="#fff" stroke="#7d7d7d" stroke-width="1.500"/></svg>
<svg style="left:676px;top:15px" width="16" height="13"><rect x=".9" y="1.300" width="13" height="10.200" rx="1.800" fill="#fff" stroke="#7d7d7d" stroke-width="1.500"/><rect x="4.400" y="4.900" width="6.200" height="3" rx=".6" fill="#b5b5b5" stroke="#7d7d7d" stroke-width="1.200"/></svg>
<svg style="left:714px;top:15px" width="16" height="13"><path d="M1 1.300 H5 L7.500 3.800 L10 1.300 H14 V3.300 L10.800 6.400 L14 9.500 V11.500 H10 L7.500 9 L5 11.500 H1 V9.500 L4.200 6.400 L1 3.300 Z" fill="#fff" stroke="#7d7d7d" stroke-width="1.400" stroke-linejoin="round"/></svg>
<svg style="left:353.5px;top:474.5px;z-index:3" width="19" height="21"><path d="M.8 19.500 Q.8 13.500 5.500 12.300 L7.500 11.500 H11.300 L13.500 12.300 Q18 13.500 18 19.500 Z" fill="url(#gBody)" stroke="#9096a3" stroke-width=".6"/><path d="M7.300 11 h4.300 v2.300 l-2.150 1.800 l-2.150-1.800 Z" fill="#e9c9a4"/><ellipse cx="9.400" cy="7" rx="4" ry="4.800" fill="#f1d3ae"/><path d="M5 6.800 Q4.300 .8 9.500 .8 Q14.800 .8 13.900 6.800 Q12.800 3.800 9.500 4 Q6.500 3.800 5 6.800 Z" fill="#8c6a2e"/></svg>
<div class="btn" style="left:12.5px;width:93px;padding-left:0px"><span id="bt0" style="letter-spacing:-0.120px">Экспорт</span></div>
<div class="btn" style="left:114px;width:93px;padding-left:0px"><span id="bt1" style="letter-spacing:-0.327px">Импорт</span></div>
<div class="btn" style="left:215.5px;width:124px;padding-left:0px"><span id="bt2" style="letter-spacing:-0.090px">По умолчанию</span></div>
<div class="btn" style="left:347.5px;width:178px;padding-left:25.0px"><span id="bt3" style="letter-spacing:-0.085px">Настройка профиля</span></div>
<div class="btn" style="left:533.5px;width:94px;padding-left:0px"><span id="bt4" style="letter-spacing:-0.941px">OK</span></div>
<div class="btn" style="left:635px;width:94px;padding-left:0px"><span id="bt5" style="letter-spacing:-0.318px">Отмена</span></div>
</div></div>
<svg style="left:0;top:0;z-index:20" width="1409" height="941"><path d="M696.4 376 L715.9 377.2 L713.4 382.7 L881.2 475.6 Q884 479.500 879.200 480.800 L710.5 387.7 L707.4 392.1 Z" fill="#fc0009"/></svg>
</body></html>
